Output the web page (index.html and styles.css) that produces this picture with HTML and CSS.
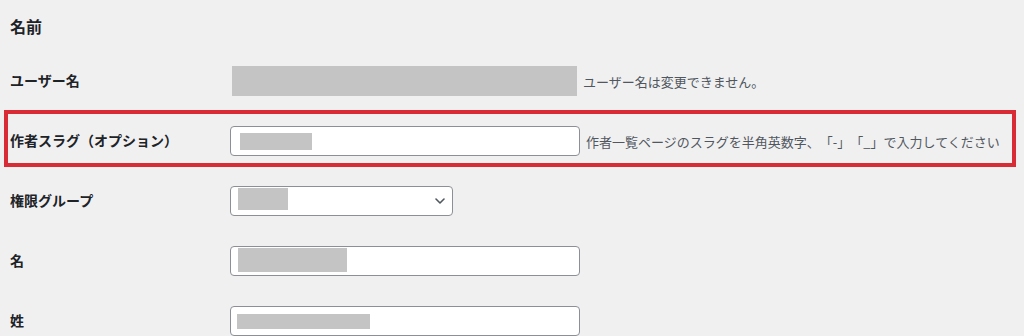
FILE: index.html
```html
<!DOCTYPE html>
<html lang="ja">

<head>
    <meta charset="UTF-8" />
    <meta name="viewport" content="width=device-width, initial-scale=1.0" />
    <title>プロフィール - 名前</title>
    <link rel="stylesheet" href="styles.css">
</head>

<body>
    <div class="wrap">
        <h2 class="section-title">名前</h2>

        <div class="form-table">
            <div class="form-row">
                <div class="form-label">ユーザー名</div>
                <div class="form-field">
                    <div class="readonly-mask"></div>
                    <span class="description">ユーザー名は変更できません。</span>
                </div>
            </div>

            <div class="form-row is-highlighted">
                <div class="form-label">作者スラグ（オプション）</div>
                <div class="form-field">
                    <div class="text-input"><span class="mask mask-slug"></span></div>
                    <span class="description">作者一覧ページのスラグを半角英数字、「-」「_」で入力してください</span>
                </div>
            </div>

            <div class="form-row">
                <div class="form-label">権限グループ</div>
                <div class="form-field">
                    <div class="select-input">
                        <span class="mask mask-role"></span>
                        <svg class="chevron" width="10" height="6" viewBox="0 0 10 6">
                            <path d="M1 1l4 4 4-4" fill="none" stroke="#50575e" stroke-width="1.6" stroke-linecap="round" stroke-linejoin="round" />
                        </svg>
                    </div>
                </div>
            </div>

            <div class="form-row">
                <div class="form-label">名</div>
                <div class="form-field">
                    <div class="text-input"><span class="mask mask-first"></span></div>
                </div>
            </div>

            <div class="form-row">
                <div class="form-label">姓</div>
                <div class="form-field">
                    <div class="text-input"><span class="mask mask-last"></span></div>
                </div>
            </div>
        </div>
    </div>
</body>

</html>
```

FILE: styles.css
```css
* {
    box-sizing: border-box;
}

body {
    margin: 0;
    font-family: "Noto Sans CJK JP", "Noto Sans", sans-serif;
    font-size: 14px;
    color: #1d2327;
    background-color: #f0f0f1;
    overflow: hidden;
}

.wrap {
    padding: 0 10px;
}

.section-title {
    margin: 14px 0 13px;
    font-size: 16px;
    line-height: 24px;
    font-weight: bold;
    color: #1d2327;
}

.form-row {
    display: flex;
    align-items: flex-start;
    position: relative;
}

.form-row.is-highlighted::after {
    content: "";
    position: absolute;
    top: -1px;
    bottom: 4px;
    left: -6px;
    right: -2px;
    border: 4px solid #d92b35;
    pointer-events: none;
}

.form-label {
    width: 210px;
    flex-shrink: 0;
    padding: 20px 10px 20px 0;
    line-height: 1.3;
    font-weight: 600;
    white-space: nowrap;
}

.form-field {
    display: flex;
    align-items: center;
    padding: 15px 10px;
}

.description {
    margin-left: 6px;
    font-size: 13px;
    color: #50575e;
    white-space: nowrap;
    text-spacing-trim: space-all;
}

.readonly-mask {
    width: 345px;
    height: 30px;
    margin-left: 2px;
    background-color: #c4c4c4;
}

.text-input,
.select-input {
    display: flex;
    align-items: flex-start;
    height: 30px;
    background-color: #fff;
    border: 1px solid #8c8f94;
    border-radius: 4px;
}

.text-input {
    width: 350px;
    padding: 0 8px 0 6px;
}

.select-input {
    width: 223px;
    padding: 0 7px 0 7px;
    justify-content: space-between;
}

.chevron {
    align-self: center;
}

.mask {
    display: block;
    background-color: #c4c4c4;
}

.mask-slug {
    width: 72px;
    height: 17px;
    margin: 6px 0 0 3px;
}

.mask-role {
    width: 50px;
    height: 22px;
    margin-top: 1px;
}

.mask-first {
    width: 109px;
    height: 24px;
    margin: 1px 0 0 1px;
}

.mask-last {
    width: 133px;
    height: 15px;
    margin-top: 7px;
}
```
